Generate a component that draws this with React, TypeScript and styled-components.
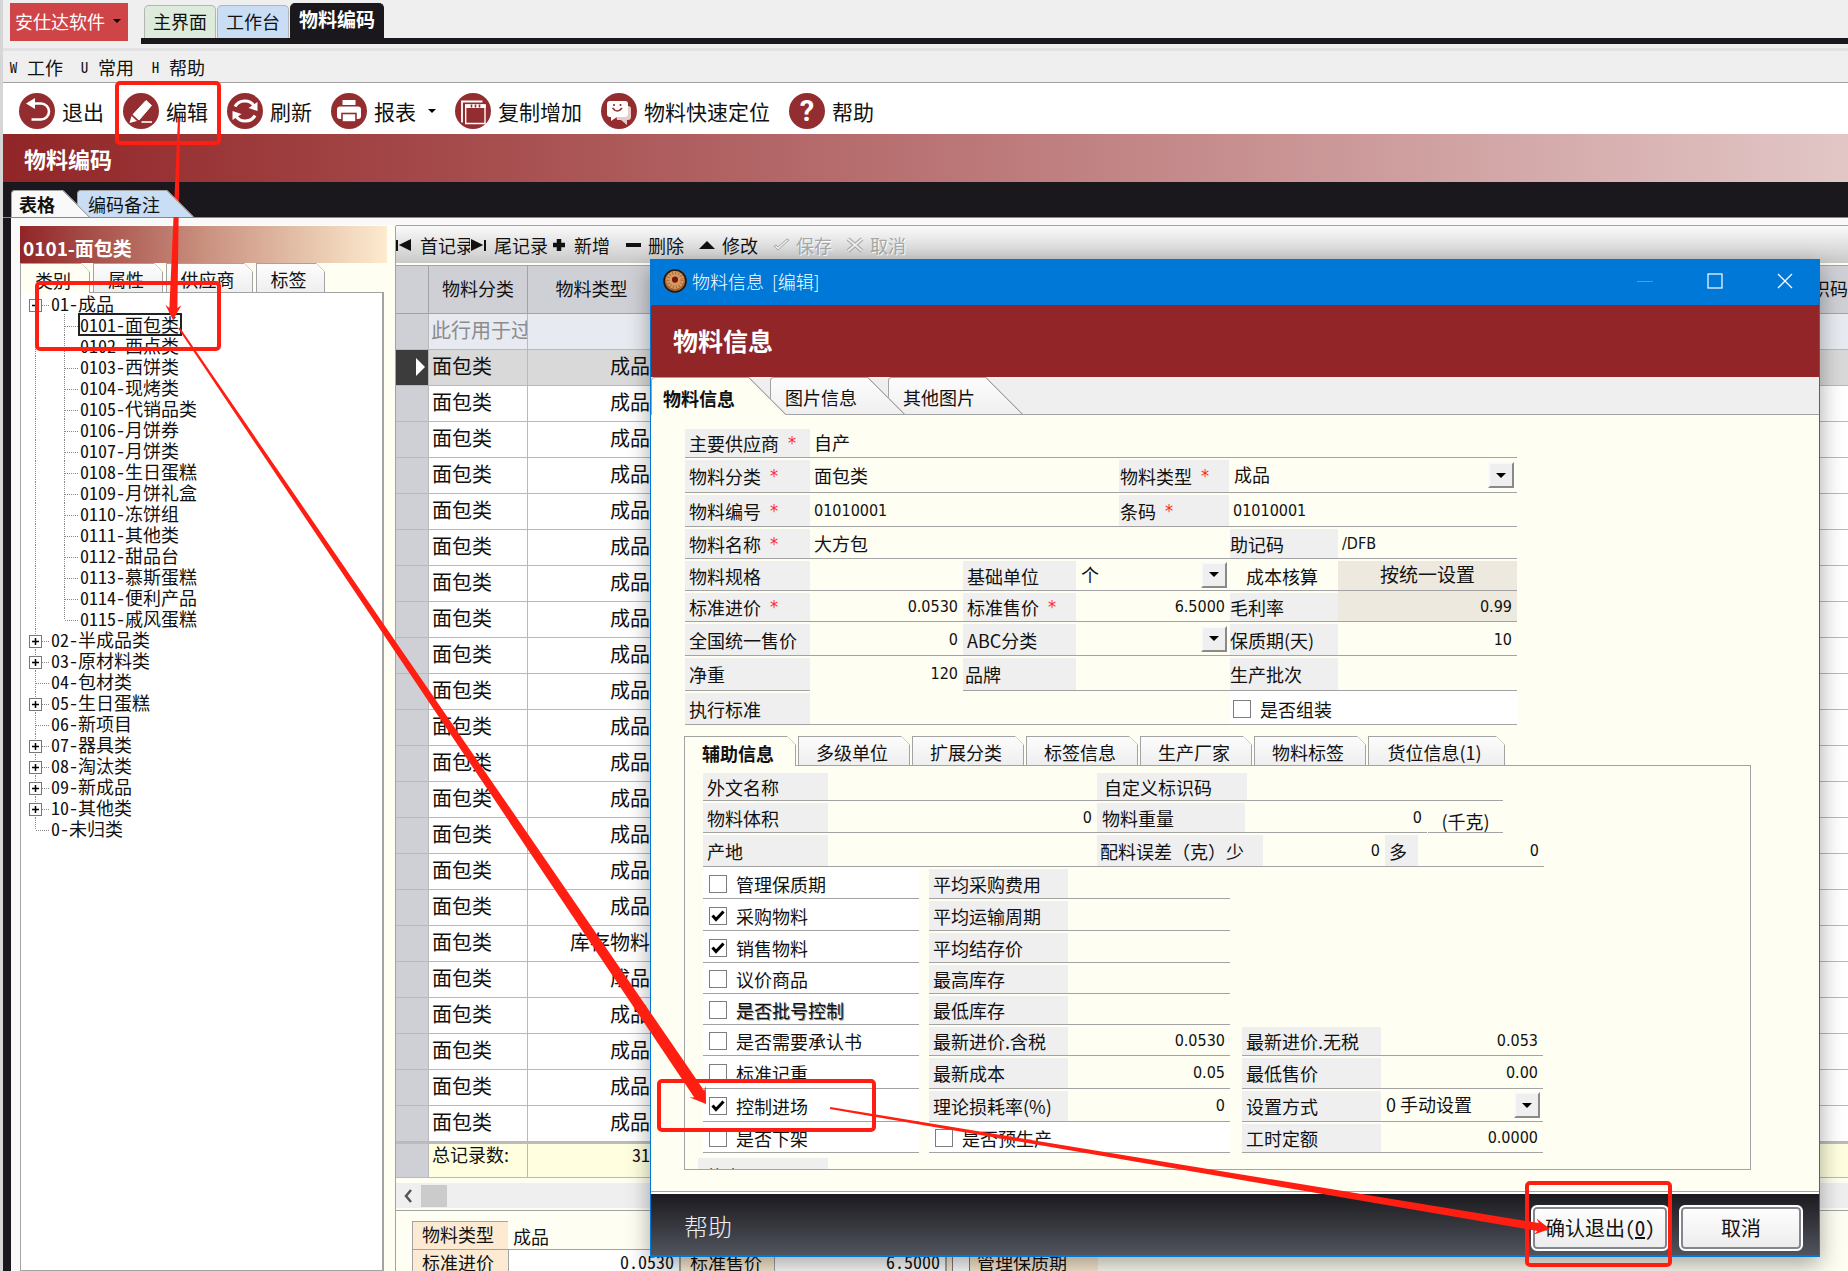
import React from "react";
import styled, { createGlobalStyle, css } from "styled-components";

const sans = `"Noto Sans CJK SC", "Noto Sans", sans-serif`;
const mono = `"Noto Sans Mono CJK SC", "Noto Sans CJK SC", monospace`;
const digits = `"DejaVu Sans Condensed", "DejaVu Sans", "Noto Sans CJK SC", sans-serif`;

const c = {
  ink: "#111",
  maroon: "#912527",
  black: "#1a181c",
  cream: "#fefef3",
  grey: "#efefef",
  line: "#a3a3a3",
  blue: "#0078d7",
  mark: "#ff1f12",
};

const Global = createGlobalStyle`
  *, *::before, *::after { box-sizing: border-box; }
  body { margin: 0; background: ${c.grey}; font-family: ${sans}; font-size: 18px; line-height: 20px; color: ${c.ink}; }
  button, input, select { font: inherit; color: inherit; margin: 0; padding: 0; border: 0; border-radius: 0; background: none; }
  ul { list-style: none; margin: 0; padding: 0; }
`;

/* ---------- shell ---------- */

const Shell = styled.div`
  position: relative;
  display: flex;
  flex-direction: column;
  height: 100vh;
  overflow: hidden;
  white-space: nowrap;
  border-left: 3px solid #d6d6d6;
`;

const TopBar = styled.header`
  display: flex;
  height: 51px;
  flex: none;
  padding-left: 7px;
  border-bottom: 3px solid #e2e2e2;
`;

const Brand = styled.button`
  display: flex;
  align-items: center;
  gap: 8px;
  height: 38px;
  width: 118px;
  margin-top: 3px;
  padding: 0 0 2px 5px;
  background: #cf4547;
  color: #fff;
`;

const Caret = styled.span<{ $size?: number }>`
  width: 0;
  height: 0;
  border: ${(p) => p.$size ?? 4}px solid transparent;
  border-top-color: #000;
  border-bottom: 0;
`;

const TopTabs = styled.nav`
  display: flex;
  align-items: flex-end;
  flex: 1;
  height: 44px;
  margin-left: 13px;
  padding-left: 3px;
  border-bottom: 6px solid ${c.black};
`;

const TopTab = styled.button<{ $bg: string; $active?: boolean }>`
  height: ${(p) => (p.$active ? 35 : 33)}px;
  padding: 0 8px 2px;
  margin-right: ${(p) => (p.$active ? 0 : 1)}px;
  border: 1px solid ${(p) => (p.$active ? c.black : "#b4b4b4")};
  border-bottom: 0;
  border-radius: 5px 5px 0 0;
  background: ${(p) => p.$bg};
  ${(p) => p.$active && css`color: #fff; font-weight: 700; font-size: 19px; padding-bottom: 4px;`}
`;

const MenuBar = styled.nav`
  display: flex;
  gap: 17px;
  align-items: center;
  height: 32px;
  flex: none;
  padding-left: 6px;
  border-bottom: 1px solid ${c.line};
  font-family: ${mono};
`;

const MenuItem = styled.button`
  display: flex;
  align-items: center;
  gap: 9px;
  span { font-size: 15px; width: 9px; text-align: center; }
`;

const ToolBar = styled.div`
  display: flex;
  gap: 19px;
  align-items: center;
  height: 51px;
  flex: none;
  padding: 4px 0 0 16px;
  background: #fff;
`;

const ToolButton = styled.button`
  display: flex;
  align-items: center;
  gap: 7px;
  font-size: 21px;
  line-height: 36px;
  svg { flex: none; }
  ${Caret} { margin-left: 5px; }
`;

const TitleBand = styled.h1`
  display: flex;
  align-items: center;
  height: 48px;
  flex: none;
  margin: 0;
  padding-left: 21px;
  background: linear-gradient(90deg, ${c.maroon}, #a54a4b 24%, #b87071 48%, #e2c6c6);
  color: #fff;
  font-size: 22px;
`;

const ViewTabs = styled.nav`
  display: flex;
  align-items: flex-end;
  height: 36px;
  flex: none;
  padding-left: 8px;
  background: ${c.black};
  border-bottom: 1px solid #8a8a8a;
`;

/* A tab whose whole right side runs down at 45 degrees. */
const SlantTab = styled.button<{ $h: number; $w: number; $bg: string; $active?: boolean; $first?: boolean; $z: number; $overlap: number }>`
  position: relative;
  z-index: ${(p) => p.$z};
  width: ${(p) => p.$w}px;
  height: ${(p) => p.$h}px;
  margin-left: ${(p) => (p.$first ? 0 : -p.$overlap)}px;
  padding-left: ${(p) => (p.$first ? p.$overlap - 6 : p.$overlap - 3)}px;
  text-align: left;
  border: 1px solid ${c.line};
  border-bottom: 0;
  border-top-left-radius: 4px;
  font-weight: ${(p) => (p.$active ? 700 : 400)};
  background:
    linear-gradient(225deg, ${c.line} ${(p) => Math.round(p.$h * 0.707) + 1}px, transparent ${(p) => Math.round(p.$h * 0.707) + 1}px) border-box,
    ${(p) => p.$bg} border-box;
  clip-path: polygon(0 0, calc(100% - ${(p) => p.$h}px) 0, 100% 100%, 0 100%);
`;

/* A tab with only its top right corner cut. */
const CutTab = styled.button<{ $active?: boolean; $w: number }>`
  width: ${(p) => p.$w}px;
  height: 30px;
  padding: 2px 4px 0 0;
  border: 1px solid ${c.line};
  border-bottom-width: ${(p) => (p.$active ? 0 : 1)}px;
  font-weight: ${(p) => (p.$active ? 700 : 400)};
  background:
    linear-gradient(225deg, ${c.line} 7px, transparent 7px) border-box,
    ${(p) => (p.$active ? c.cream : "linear-gradient(#fdfdfd, #eee)")} border-box;
  clip-path: polygon(0 0, calc(100% - 9px) 0, 100% 9px, 100% 100%, 0 100%);
`;

const Body = styled.main`
  display: flex;
  gap: 8px;
  flex: 1;
  min-height: 0;
  padding: 8px 0 0 9px;
  border-left: 8px solid ${c.black};
  background:
    linear-gradient(#f9f9f9, #f9f9f9) 0 0 / 100% 7px no-repeat,
    linear-gradient(90deg, #f9f9f9 9px, ${c.cream} 9px);
`;

/* ---------- category tree ---------- */

const TreePane = styled.aside`
  display: flex;
  flex-direction: column;
  width: 367px;
  flex: none;
`;

const TreeTitle = styled.h2`
  display: flex;
  align-items: center;
  height: 37px;
  flex: none;
  margin: 0;
  padding: 6px 0 0 3px;
  background: linear-gradient(90deg, ${c.maroon}, #c9907e 50%, #fdebcf);
  color: #fff;
  font-size: 19px;
`;

const TreeTabs = styled.nav`
  display: flex;
  gap: 3px;
  margin-bottom: -1px;
  ${CutTab} { font-weight: 400; }
`;

const TreeList = styled.ul`
  flex: 1;
  min-height: 0;
  margin-right: 3px;
  border: 1px solid ${c.line};
  border-right-width: 2px;
  background: #fff;
  font-family: ${mono};
`;

const TreeRow = styled.li`
  display: flex;
  height: 21px;
  line-height: 21px;
  svg { flex: none; }
`;

const TreeText = styled.span<{ $on?: boolean }>`
  padding: 0 2px 0 1px;
  outline: ${(p) => (p.$on ? "2px solid #222" : "none")};
  outline-offset: -1px;
`;

type Node = { text: string; kind: "open" | "closed" | "leaf" | "last" | "child" | "childEnd" };
const tree: Node[] = [
  { text: "01-成品", kind: "open" },
  ...["0101-面包类", "0102-西点类", "0103-西饼类", "0104-现烤类", "0105-代销品类", "0106-月饼券", "0107-月饼类", "0108-生日蛋糕", "0109-月饼礼盒", "0110-冻饼组", "0111-其他类", "0112-甜品台", "0113-慕斯蛋糕", "0114-便利产品"].map(
    (text): Node => ({ text, kind: "child" })
  ),
  { text: "0115-戚风蛋糕", kind: "childEnd" },
  { text: "02-半成品类", kind: "closed" },
  { text: "03-原材料类", kind: "closed" },
  { text: "04-包材类", kind: "leaf" },
  { text: "05-生日蛋糕", kind: "closed" },
  { text: "06-新项目", kind: "leaf" },
  { text: "07-器具类", kind: "closed" },
  { text: "08-淘汰类", kind: "closed" },
  { text: "09-新成品", kind: "closed" },
  { text: "10-其他类", kind: "closed" },
  { text: "0-未归类", kind: "last" },
];

function Guide({ kind }: { kind: Node["kind"] }) {
  const child = kind === "child" || kind === "childEnd";
  const box = kind === "open" || kind === "closed";
  const dots = { stroke: "#888", strokeDasharray: "1 1" };
  const top = kind === "open" ? 12 : 0;
  const bottom = kind === "last" ? 12 : 21;
  return (
    <svg width={child ? 58 : 29} height="21" aria-hidden="true">
      <path d={`M14.5 ${top}V${bottom}`} {...dots} />
      {child ? (
        <path d={`M43.5 0V${kind === "childEnd" ? 12 : 21}M44 12.5H57`} {...dots} />
      ) : (
        <path d="M15 12.5H28" {...dots} />
      )}
      {box && (
        <>
          <rect x="8.5" y="6.5" width="12" height="12" fill="#fff" stroke="#777" />
          <path d={kind === "open" ? "M11 12.5H18" : "M11 12.5H18M14.5 9V16"} stroke="#000" strokeWidth="1.5" />
        </>
      )}
    </svg>
  );
}

/* ---------- record grid ---------- */

const GridPane = styled.section`
  display: flex;
  flex-direction: column;
  flex: 1;
  min-width: 0;
  border-left: 1px solid ${c.line};
`;

const RecordBar = styled.div`
  display: flex;
  height: 38px;
  flex: none;
  border-top: 1px solid ${c.line};
  margin-bottom: 2px;
  margin-top: -1px;
  background: linear-gradient(#fafafa, #c9c9c9);
`;

const RecordButton = styled.button<{ $off?: boolean; $wide?: boolean }>`
  display: flex;
  align-items: center;
  gap: 6px;
  width: ${(p) => (p.$wide ? 80 : 74)}px;
  overflow: hidden;
  color: ${(p) => (p.$off ? "#a8a8a8" : c.ink)};
  text-shadow: ${(p) => (p.$off ? "1px 1px #fff" : "none")};
  svg { flex: none; }
`;

const Table = styled.table`
  width: 100%;
  table-layout: fixed;
  border-collapse: separate;
  border-spacing: 0;
  border-top: 1px solid ${c.line};
  th, td {
    height: 36px;
    padding: 0 5px 4px 3px;
    overflow: hidden;
    border-right: 1px solid #b9b9b9;
    border-bottom: 1px solid #b9b9b9;
    background: #fff;
    font-size: 20px;
    line-height: 24px;
    text-align: left;
    font-weight: 400;
  }
  td:nth-child(3) { text-align: right; }
  td:nth-child(n + 4), th:nth-child(n + 4) { border-right: 0; }
  tr > :first-child { background: #cfd0d6; padding: 0 3px; text-align: right; }
  thead th { height: 48px; padding: 0 0 4px; background: #cfd0d6; text-align: center; font-size: 18px; border-color: ${c.line}; }
`;

const FilterRow = styled.tr`
  && td { background: #e7eaf0; color: #8c8c8c; }
  && > :first-child { background: #cfd0d6; }
  td:nth-child(2) { padding-left: 2px; padding-right: 0; }
`;

const CurrentRow = styled.tr`
  && td { background: #d9d9d9; }
  && > :first-child { background: #3c3c3c; }
`;

const TotalRow = styled.tr`
  && td { background: #ffffdf; border-top: 2px solid #bcbcbc; font-size: 18px; line-height: 20px; vertical-align: top; }
  && > :first-child { background: #cfd0d6; }
  td:nth-child(3) { font-family: ${mono}; }
`;

const ScrollBar = styled.div`
  display: flex;
  align-items: center;
  height: 27px;
  flex: none;
  margin-top: 5px;
  gap: 8px;
  padding-left: 7px;
  background: #efefef;
  border-bottom: 2px solid ${c.cream};
  svg { flex: none; }
`;

const Thumb = styled.span`
  width: 26px;
  height: 22px;
  background: #cbcbcb;
`;

const Detail = styled.div`
  flex: 1;
  padding: 10px 0 0 16px;
  border-top: 1px solid ${c.line};
  overflow: hidden;
`;

const DetailRow = styled.div`
  display: flex;
  height: 28px;
`;

const DetailLabel = styled.label<{ $w: number }>`
  width: ${(p) => p.$w}px;
  padding: 2px 0 0 9px;
  border: 1px solid ${c.line};
  border-width: 1px 0 0 1px;
  background: #fcebd2;
`;

const DetailInput = styled.input<{ $w: number; $plain?: boolean }>`
  width: ${(p) => p.$w}px;
  height: 28px;
  padding: 2px 5px 0 4px;
  border: 1px solid ${c.line};
  ${(p) =>
    p.$plain
      ? css`border-color: transparent;`
      : css`background: #fff; text-align: right; font-family: ${mono}; padding-bottom: 6px;`}
`;

const DetailCheck = styled.input`
  && {
    appearance: none;
    width: 18px;
    height: 18px;
    margin: 0 7px 0 -4px;
    border: 1px solid #7d7d7d;
    background: #fff;
    vertical-align: -3px;
  }
`;

/* ---------- dialog ---------- */

const Dialog = styled.section`
  position: absolute;
  left: 647px;
  right: 28px;
  top: 259px;
  border: 1px solid ${c.blue};
  border-bottom-width: 2px;
  background: ${c.cream};
  box-shadow: 0 8px 22px rgba(0, 0, 0, 0.35);
`;

const Caption = styled.header`
  display: flex;
  align-items: center;
  height: 45px;
  padding: 0 23px 3px 12px;
  background: ${c.blue};
  color: #fff;
  font-weight: 300;
  span { margin-left: 5px; flex: 1; white-space: pre; }
`;

const CaptionButton = styled.button`
  width: 70px;
  height: 42px;
  &:last-child { width: 22px; margin-left: 24px; }
`;

const DialogTitle = styled.h2`
  display: flex;
  align-items: center;
  height: 72px;
  margin: 0;
  padding: 0 0 2px 22px;
  background: ${c.maroon};
  color: #fff;
  font-size: 25px;
`;

const PageTabs = styled.nav`
  display: flex;
  height: 38px;
  background: ${c.grey};
  box-shadow: inset 0 -1px ${c.line};
  ${SlantTab} { padding-top: 2px; }
`;

const Content = styled.div`
  padding: 12px 68px 21px 34px;
`;

const Form = styled.div`
  max-width: 832px;
`;

const FormRow = styled.div<{ $h: number }>`
  display: flex;
  height: ${(p) => p.$h}px;
`;

const ruled = css`
  border-bottom: 1px solid ${c.line};
`;

const Label = styled.label<{ $w: number; $pad?: number; $plain?: boolean }>`
  display: flex;
  align-items: center;
  gap: 9px;
  flex: none;
  width: ${(p) => p.$w}px;
  padding-left: ${(p) => p.$pad ?? 4}px;
  background: ${(p) => (p.$plain ? c.cream : c.grey)};
  border-top: 2px solid ${c.cream};
  ${ruled}
`;

const Star = styled.span`
  color: #ff2a2a;
  font-family: ${digits};
  font-size: 18px;
`;

const Value = styled.input<{ $w?: number; $num?: boolean; $right?: boolean; $tan?: boolean; $bare?: boolean }>`
  ${(p) => (p.$w ? `width: ${p.$w}px; flex: none;` : "width: 0; flex: 1;")}
  min-width: 0;
  padding: ${(p) => (p.$num ? "2px 5px 0 4px" : "0 5px 0 4px")};
  font-family: ${(p) => (p.$num ? digits : sans)};
  font-size: ${(p) => (p.$num ? 16 : 18)}px;
  text-align: ${(p) => (p.$right ? "right" : "left")};
  background: ${(p) => (p.$tan ? "#eee9df" : "transparent")};
  ${ruled}
  ${(p) => p.$bare && css`border-bottom-color: transparent;`}
`;

const CenterButton = styled.button`
  flex: 1;
  padding-bottom: 4px;
  font-size: 19px;
  background: #eee9df;
  border-top: 2px solid ${c.cream};
  ${ruled}
`;

const SelectBox = styled.span<{ $w?: number }>`
  position: relative;
  display: flex;
  ${(p) => (p.$w ? `width: ${p.$w}px; flex: none;` : "flex: 1;")}
  ${ruled}
  select { flex: 1; width: 0; appearance: none; padding: 0 30px 2px 5px; }
`;

const Drop = styled.span`
  position: absolute;
  right: 3px;
  top: 50%;
  margin-top: -13px;
  display: grid;
  place-items: center;
  width: 26px;
  height: 26px;
  border: 2px solid #fafafa;
  border-right-color: #8a8a8a;
  border-bottom-color: #8a8a8a;
  background: ${c.grey};
  pointer-events: none;
`;

const CheckLabel = styled.label<{ $h?: number; $ghost?: boolean; $grow?: boolean }>`
  display: flex;
  align-items: center;
  gap: 9px;
  flex: ${(p) => (p.$grow ? 1 : "none")};
  ${(p) => p.$h && `height: ${p.$h}px;`}
  padding: 2px 0 0 ${(p) => (p.$grow ? 3 : 6)}px;
  background: #fff;
  ${(p) => p.$ghost && css`text-shadow: 1px 1px #8c8c8c;`}
  ${ruled}
`;

const Tick = styled.span`
  position: relative;
  display: block;
  width: 18px;
  height: 18px;
  flex: none;
  input { appearance: none; display: block; width: 18px; height: 18px; border: 1px solid #7d7d7d; background: #fff; }
  svg { position: absolute; left: 0; top: 0; display: none; pointer-events: none; }
  input:checked + svg { display: block; }
`;

const SubTabs = styled.nav`
  display: flex;
  gap: 2px;
  margin: 11px 0 -1px -1px;
`;

const SubPanel = styled.div`
  margin-left: -1px;
  height: 405px;
  padding: 5px 0 0 18px;
  overflow: hidden;
  border: 1px solid ${c.line};
`;

/* Lets the active tab open into the panel under it. */
const OpenTab = styled(CutTab)`
  position: relative;
  z-index: 1;
`;

const Unit = styled.span`
  width: 75px;
  margin-left: 1px;
  padding-top: 10px;
  text-align: center;
  ${ruled}
`;

const Columns = styled.div`
  display: flex;
  align-items: flex-end;
`;

const Column = styled.div<{ $w: number; $gap: number }>`
  width: ${(p) => p.$w}px;
  margin-right: ${(p) => p.$gap}px;
`;

const Cutoff = styled.div`
  width: 130px;
  height: 24px;
  margin: 5px 0 0 -5px;
  padding: 8px 0 0 8px;
  background: ${c.grey};
`;

const DialogFoot = styled.footer`
  display: flex;
  align-items: center;
  gap: 10px;
  height: 64px;
  padding: 8px 16px 0 33px;
  border-top: 1px solid ${c.line};
  box-shadow: inset 0 2px #fff;
  background: linear-gradient(${c.black}, #50545d);
`;

const HelpLink = styled.a`
  flex: 1;
  padding-bottom: 4px;
  color: #eee;
  font-size: 24px;
  font-weight: 300;
  text-decoration: none;
`;

const FootButton = styled.button<{ $w: number }>`
  width: ${(p) => p.$w}px;
  height: 46px;
  border: 2px solid #fff;
  border-radius: 6px;
  box-shadow: inset 0 0 0 2px #83868c;
  background: linear-gradient(#fff, #ececec);
  font-family: ${mono};
  font-size: 20px;
`;

/* ---------- guidance marks ---------- */

const Frame = styled.div<{ $x: number; $y: number; $w: number; $h: number }>`
  position: absolute;
  left: ${(p) => p.$x - 3}px;
  top: ${(p) => p.$y}px;
  width: ${(p) => p.$w}px;
  height: ${(p) => p.$h}px;
  border: 4px solid ${c.mark};
  border-radius: 5px;
  pointer-events: none;
`;

const Marks = styled.svg`
  position: absolute;
  left: -3px;
  top: 0;
  pointer-events: none;
`;

function Arrow({ from, to, half }: { from: [number, number]; to: [number, number]; half: number }) {
  const dx = to[0] - from[0];
  const dy = to[1] - from[1];
  const len = Math.hypot(dx, dy);
  const at = (along: number, side: number) =>
    `${(from[0] + (dx * along - dy * side) / len).toFixed(1)},${(from[1] + (dy * along + dx * side) / len).toFixed(1)}`;
  const neck = len - 12;
  const wing = len - 15;
  return (
    <polygon
      fill={c.mark}
      points={[at(0, -1), at(neck, -half), at(wing, -half - 4), at(len, 0), at(wing, half + 4), at(neck, half), at(0, 1)].join(" ")}
    />
  );
}

/* ---------- icons ---------- */

function Disc({ children }: { children: React.ReactNode }) {
  return (
    <svg width="36" height="36" viewBox="0 0 36 36" fill="none" stroke="#fff" strokeWidth="2.6" aria-hidden="true">
      <circle cx="18" cy="18" r="18" fill="#932d30" stroke="none" />
      {children}
    </svg>
  );
}

const icons = {
  exit: (
    <Disc>
      <path d="M13 10.5H22a8 8 0 0 1 0 16H12.5" />
      <path d="M7 10.5L16 5v11z" fill="#fff" stroke="none" />
    </Disc>
  ),
  edit: (
    <Disc>
      <path d="M23 7.500l5.500 5-12.500 14.500-6-5.500z" fill="#fff" stroke="#fff" strokeWidth="1" strokeLinejoin="round" />
      <path d="M8.500 23l5.500 5L6.500 30z" fill="#fff" stroke="none" />
      <path d="M18.500 29H29" strokeWidth="1.600" />
    </Disc>
  ),
  refresh: (
    <Disc>
      <path d="M8 13.500C12 6.500 23 6 27 13M28 22.500C24 29.500 13 30 9 23" strokeWidth="3.200" />
      <path d="M30.500 9v9l-9-3zM5.500 27v-9l9 3z" fill="#fff" stroke="none" />
    </Disc>
  ),
  print: (
    <Disc>
      <path d="M11.500 7h13v5h-13z" fill="#fff" stroke="none" />
      <rect x="6" y="13.500" width="24" height="12.500" rx="3" fill="#fff" stroke="none" />
      <rect x="11" y="20.500" width="14" height="8.500" fill="#fff" stroke="#932d30" strokeWidth="1.600" />
    </Disc>
  ),
  copy: (
    <Disc>
      <path d="M7 29.500V8.500h20.500" strokeWidth="1.800" />
      <path d="M10.700 12h19.300v18.500h-19.300z" strokeWidth="1.400" />
      <path d="M10 13.200h20.700" strokeWidth="3.600" />
      <path d="M16.500 11.500v3M20.500 11.500v3M24.500 11.500v3" stroke="#932d30" strokeWidth="1.600" />
    </Disc>
  ),
  locate: (
    <Disc>
      <path d="M14 13h13q3 0 3 3v8q0 3-3 3h-1v5l-6-5h-4z" fill="#e9c9c9" stroke="none" />
      <path d="M9 8h15q3 0 3 3v10q0 3-3 3h-8l-6 4v-4H9q-3 0-3-3V11q0-3 3-3z" fill="#fff" stroke="none" />
      <path d="M11.500 15q5 6 9.500 0M13 11v2M19.500 11v2" stroke="#932d30" strokeWidth="1.600" />
    </Disc>
  ),
  help: (
    <Disc>
      <text x="18" y="28" textAnchor="middle" fontSize="29" fontWeight="700" fontFamily="Roboto, sans-serif" fill="#fff" stroke="none">?</text>
    </Disc>
  ),
};

const recordIcons: Record<string, React.ReactNode> = {
  first: <path d="M1 4v11M14 4.500v9L5 9z" />,
  last: <path d="M15 4v11M2 4.500v9L11 9z" />,
  add: <path d="M9 3v12M3 9h12" strokeWidth="4.500" />,
  remove: <path d="M2 9h15" strokeWidth="4" />,
  change: <path d="M1 13L9 5l8 8z" stroke="none" />,
  save: <path d="M2 10l4 4L17 4l-2-1-9 8-2-2z" fill="#eee" stroke="#aaa" strokeWidth="1" />,
  cancel: (
    <>
      <path d="M2 3l14 12M16 3L2 15" stroke="#a5a5a5" strokeWidth="4" />
      <path d="M2 3l14 12M16 3L2 15" stroke="#eee" strokeWidth="2" />
    </>
  ),
};

function Check({ label, on, h, ghost, grow }: { label: string; on?: boolean; h?: number; ghost?: boolean; grow?: boolean }) {
  return (
    <CheckLabel $h={h} $ghost={ghost} $grow={grow}>
      <Tick>
        <input type="checkbox" defaultChecked={on} />
        <svg width="18" height="18" viewBox="0 0 18 18" aria-hidden="true">
          <path d="M3.500 8.500L7 12.500L14.500 4.500" fill="none" stroke="#000" strokeWidth="3" />
        </svg>
      </Tick>
      {label}
    </CheckLabel>
  );
}

type FieldProps = {
  id: string;
  label: string;
  lw: number;
  vw?: number;
  value?: string;
  star?: boolean;
  num?: boolean;
  right?: boolean;
  tan?: boolean;
  bare?: boolean;
  select?: boolean;
  pad?: number;
};

function Field({ id, label, lw, vw, value = "", star, num, right, tan, bare, select, pad }: FieldProps) {
  return (
    <>
      <Label htmlFor={id} $w={lw} $pad={pad}>
        {label}
        {star && <Star>*</Star>}
      </Label>
      {select ? (
        <SelectBox $w={vw}>
          <select id={id} defaultValue={value}>
            <option>{value}</option>
          </select>
          <Drop>
            <Caret $size={5} />
          </Drop>
        </SelectBox>
      ) : (
        <Value id={id} $w={vw} $num={num || right} $right={right} $tan={tan} $bare={bare} defaultValue={value} />
      )}
    </>
  );
}

const rowHeights = [32, 32, 32, 31, 31, 31, 33, 33, 31];
const checks: [string, boolean][] = [
  ["管理保质期", false],
  ["采购物料", true],
  ["销售物料", true],
  ["议价商品", false],
  ["是否批号控制", false],
  ["是否需要承认书", false],
  ["标准记重", false],
  ["控制进场", true],
  ["是否下架", false],
];
const stock: [string, string][] = [
  ["平均采购费用", ""],
  ["平均运输周期", ""],
  ["平均结存价", ""],
  ["最高库存", ""],
  ["最低库存", ""],
  ["最新进价.含税", "0.0530"],
  ["最新成本", "0.05"],
  ["理论损耗率(%)", "0"],
];
const price: [string, string][] = [
  ["最新进价.无税", "0.053"],
  ["最低售价", "0.00"],
  ["设置方式", "0 手动设置"],
  ["工时定额", "0.0000"],
];
const gridTypes = Array.from({ length: 21 }, (_, i) => (i === 15 ? "库存物料" : "成品"));

function MaterialDialog() {
  return (
    <Dialog role="dialog" aria-label="物料信息">
      <Caption>
        <svg width="24" height="24" viewBox="0 0 24 24" aria-hidden="true">
          <circle cx="12" cy="12" r="11" fill="#a4622f" stroke="#2a1408" strokeWidth="1.600" />
          <circle cx="12" cy="11" r="6" fill="none" stroke="#d69a63" strokeWidth="6" />
          <circle cx="12" cy="11" r="7" fill="none" stroke="#a86a38" strokeWidth="3" strokeDasharray="1 2" />
          <circle cx="12" cy="10.500" r="3" fill="#7a1408" />
        </svg>
        <span>{"物料信息  [编辑]"}</span>
        <CaptionButton aria-label="最小化">
          <svg width="16" height="16"><path d="M0 8.500H16" stroke="#4a9be0" /></svg>
        </CaptionButton>
        <CaptionButton aria-label="最大化">
          <svg width="16" height="16"><rect x="1" y="1" width="14" height="14" fill="none" stroke="#fff" strokeWidth="1.200" /></svg>
        </CaptionButton>
        <CaptionButton aria-label="关闭">
          <svg width="16" height="16"><path d="M1 1L15 15M15 1L1 15" stroke="#fff" strokeWidth="1.300" /></svg>
        </CaptionButton>
      </Caption>
      <DialogTitle>物料信息</DialogTitle>
      <PageTabs>
        <SlantTab $h={38} $w={136} $overlap={17} $z={3} $bg={c.cream} $active $first>物料信息</SlantTab>
        <SlantTab $h={37} $w={135} $overlap={17} $z={2} $bg="linear-gradient(#fdfdfd, #efefef)">图片信息</SlantTab>
        <SlantTab $h={37} $w={135} $overlap={17} $z={1} $bg="linear-gradient(#fdfdfd, #efefef)">其他图片</SlantTab>
      </PageTabs>
      <Content>
        <Form>
          <FormRow $h={31}>
            <Field id="supplier" label="主要供应商" star lw={125} value="自产" />
          </FormRow>
          <FormRow $h={35}>
            <Field id="category" label="物料分类" star lw={125} vw={309} value="面包类" />
            <Field id="type" label="物料类型" star lw={110} pad={1} value="成品" select />
          </FormRow>
          <FormRow $h={34}>
            <Field id="code" label="物料编号" star lw={125} vw={309} value="01010001" num />
            <Field id="barcode" label="条码" star lw={110} pad={1} value="01010001" num />
          </FormRow>
          <FormRow $h={32}>
            <Field id="name" label="物料名称" star lw={125} vw={420} value="大方包" />
            <Field id="mnemonic" label="助记码" lw={108} pad={0} value="/DFB" num />
          </FormRow>
          <FormRow $h={32}>
            <Field id="spec" label="物料规格" lw={125} vw={153} />
            <Field id="unit" label="基础单位" lw={113} vw={154} value="个" select />
            <Label as="span" $w={108} $pad={16} $plain>成本核算</Label>
            <CenterButton>按统一设置</CenterButton>
          </FormRow>
          <FormRow $h={31}>
            <Field id="cost" label="标准进价" star lw={125} vw={153} value="0.0530" right />
            <Field id="sale" label="标准售价" star lw={113} vw={154} value="6.5000" right />
            <Field id="margin" label="毛利率" lw={108} pad={0} value="0.99" right tan />
          </FormRow>
          <FormRow $h={34}>
            <Field id="national" label="全国统一售价" lw={125} vw={153} value="0" right />
            <Field id="abc" label="ABC分类" lw={113} vw={154} select />
            <Field id="shelf" label="保质期(天)" lw={108} pad={0} value="10" right />
          </FormRow>
          <FormRow $h={35}>
            <Field id="net" label="净重" lw={125} vw={153} value="120" right bare />
            <Field id="brand" label="品牌" lw={113} vw={154} pad={2} />
            <Field id="batch" label="生产批次" lw={108} pad={0} />
          </FormRow>
          <FormRow $h={34}>
            <Field id="standard" label="执行标准" lw={125} vw={420} />
            <Check label="是否组装" grow />
          </FormRow>
        </Form>

        <SubTabs>
          <OpenTab $active $w={112}>辅助信息</OpenTab>
          {["多级单位", "扩展分类", "标签信息", "生产厂家", "物料标签"].map((t) => (
            <CutTab key={t} $w={112}>{t}</CutTab>
          ))}
          <CutTab $w={137}>货位信息(1)</CutTab>
        </SubTabs>
        <SubPanel>
          <FormRow $h={30}>
            <Field id="foreign" label="外文名称" lw={125} vw={269} />
            <Field id="custom" label="自定义标识码" lw={150} vw={256} pad={7} />
          </FormRow>
          <FormRow $h={32}>
            <Field id="volume" label="物料体积" lw={125} vw={269} value="0" right />
            <Field id="weight" label="物料重量" lw={148} vw={182} pad={5} value="0" right />
            <Unit>(千克)</Unit>
          </FormRow>
          <FormRow $h={34}>
            <Field id="origin" label="产地" lw={125} vw={269} />
            <Field id="less" label="配料误差（克）少" lw={166} vw={122} pad={3} value="0" right />
            <Field id="more" label="多" lw={33} vw={126} value="0" right />
          </FormRow>
          <Columns>
            <Column $w={216} $gap={10}>
              {checks.map(([label, on], i) => (
                <Check key={label} label={label} on={on} h={rowHeights[i]} ghost={i === 4} />
              ))}
            </Column>
            <Column $w={301} $gap={12}>
              {stock.map(([label, value], i) => (
                <FormRow key={label} $h={rowHeights[i]}>
                  <Field id={`stock${i}`} label={label} lw={139} value={value} right />
                </FormRow>
              ))}
              <Check label="是否预生产" h={31} />
            </Column>
            <Column $w={301} $gap={0}>
              {price.map(([label, value], i) => (
                <FormRow key={label} $h={rowHeights[i + 5]}>
                  <Field id={`price${i}`} label={label} lw={139} value={value} right={i !== 2} select={i === 2} />
                </FormRow>
              ))}
            </Column>
          </Columns>
          <Cutoff>状态</Cutoff>
        </SubPanel>
      </Content>
      <DialogFoot>
        <HelpLink href="#help">帮助</HelpLink>
        <FootButton $w={138}>确认退出(<u>O</u>)</FootButton>
        <FootButton $w={124}>取消</FootButton>
      </DialogFoot>
    </Dialog>
  );
}

export default function App() {
  return (
    <Shell>
      <Global />
      <TopBar>
        <Brand>安仕达软件<Caret /></Brand>
        <TopTabs>
          <TopTab $bg="#dcebdc">主界面</TopTab>
          <TopTab $bg="#c9ddf5">工作台</TopTab>
          <TopTab $bg={c.black} $active>物料编码</TopTab>
        </TopTabs>
      </TopBar>
      <MenuBar>
        <MenuItem><span>W</span>工作</MenuItem>
        <MenuItem><span>U</span>常用</MenuItem>
        <MenuItem><span>H</span>帮助</MenuItem>
      </MenuBar>
      <ToolBar>
        <ToolButton>{icons.exit}退出</ToolButton>
        <ToolButton>{icons.edit}编辑</ToolButton>
        <ToolButton>{icons.refresh}刷新</ToolButton>
        <ToolButton>{icons.print}报表<Caret /></ToolButton>
        <ToolButton>{icons.copy}复制增加</ToolButton>
        <ToolButton>{icons.locate}物料快速定位</ToolButton>
        <ToolButton>{icons.help}帮助</ToolButton>
      </ToolBar>
      <TitleBand>物料编码</TitleBand>
      <ViewTabs>
        <SlantTab $h={27} $w={79} $overlap={13} $z={2} $bg="#f9f9f9" $active $first>表格</SlantTab>
        <SlantTab $h={27} $w={117} $overlap={13} $z={1} $bg="#c9ddf5">编码备注</SlantTab>
      </ViewTabs>
      <Body>
        <TreePane>
          <TreeTitle>0101-面包类</TreeTitle>
          <TreeTabs>
            <CutTab $w={70} $active>类别</CutTab>
            <CutTab $w={70}>属性</CutTab>
            <CutTab $w={87}>供应商</CutTab>
            <CutTab $w={69}>标签</CutTab>
          </TreeTabs>
          <TreeList>
            {tree.map((n) => (
              <TreeRow key={n.text}>
                <Guide kind={n.kind} />
                <TreeText $on={n.text === "0101-面包类"}>{n.text}</TreeText>
              </TreeRow>
            ))}
          </TreeList>
        </TreePane>
        <GridPane>
          <RecordBar>
            {[
              ["first", "首记录"],
              ["last", "尾记录"],
              ["add", "新增"],
              ["remove", "删除"],
              ["change", "修改"],
              ["save", "保存"],
              ["cancel", "取消"],
            ].map(([key, text], i) => (
              <RecordButton key={key} $wide={i === 1} $off={i > 4} disabled={i > 4}>
                <svg width="18" height="18" viewBox="0 0 18 18" fill="#111" stroke="#111" strokeWidth="2" aria-hidden="true">
                  {recordIcons[key]}
                </svg>
                {text}
              </RecordButton>
            ))}
          </RecordBar>
          <Table>
            <colgroup>
              <col style={{ width: 33 }} />
              <col style={{ width: 99 }} />
              <col style={{ width: 128 }} />
              <col />
              <col style={{ width: 108 }} />
            </colgroup>
            <thead>
              <tr>
                <th />
                <th>物料分类</th>
                <th>物料类型</th>
                <th />
                <th>自定义标识码</th>
              </tr>
            </thead>
            <tbody>
              <FilterRow><td /><td>此行用于过滤</td><td /><td /><td /></FilterRow>
              <CurrentRow>
                <td>
                  <svg width="9" height="18" aria-label="当前行"><path d="M0 0L9 9L0 18z" fill="#fff" /></svg>
                </td>
                <td>面包类</td><td>成品</td><td /><td />
              </CurrentRow>
              {gridTypes.map((t, i) => (
                <tr key={i}><td /><td>面包类</td><td>{t}</td><td /><td /></tr>
              ))}
            </tbody>
            <tfoot>
              <TotalRow><td /><td>总记录数:</td><td>31</td><td /><td /></TotalRow>
            </tfoot>
          </Table>
          <ScrollBar>
            <svg width="10" height="14"><path d="M8 1L3 7l5 6" fill="none" stroke="#555" strokeWidth="2.5" /></svg>
            <Thumb />
          </ScrollBar>
          <Detail>
            <DetailRow>
              <DetailLabel htmlFor="d-type" $w={96}>物料类型</DetailLabel>
              <DetailInput id="d-type" $w={170} $plain defaultValue="成品" />
            </DetailRow>
            <DetailRow>
              <DetailLabel htmlFor="d-cost" $w={96}>标准进价</DetailLabel>
              <DetailInput id="d-cost" $w={172} defaultValue="0.0530" />
              <DetailLabel htmlFor="d-sale" $w={94}>标准售价</DetailLabel>
              <DetailInput id="d-sale" $w={172} defaultValue="6.5000" />
              <DetailLabel $w={152}>
                <DetailCheck type="checkbox" />
                管理保质期
              </DetailLabel>
            </DetailRow>
          </Detail>
        </GridPane>
      </Body>
      <MaterialDialog />
      <Frame $x={115} $y={81} $w={106} $h={64} />
      <Frame $x={35} $y={281} $w={186} $h={70} />
      <Frame $x={657} $y={1079} $w={219} $h={53} />
      <Frame $x={1525} $y={1181} $w={147} $h={86} />
      <Marks width="1848" height="1271" aria-hidden="true">
        <Arrow from={[179, 118]} to={[173, 320]} half={4} />
        <Arrow from={[179, 328]} to={[706, 1104]} half={6} />
        <Arrow from={[830, 1108]} to={[1550, 1229]} half={4} />
      </Marks>
    </Shell>
  );
}
